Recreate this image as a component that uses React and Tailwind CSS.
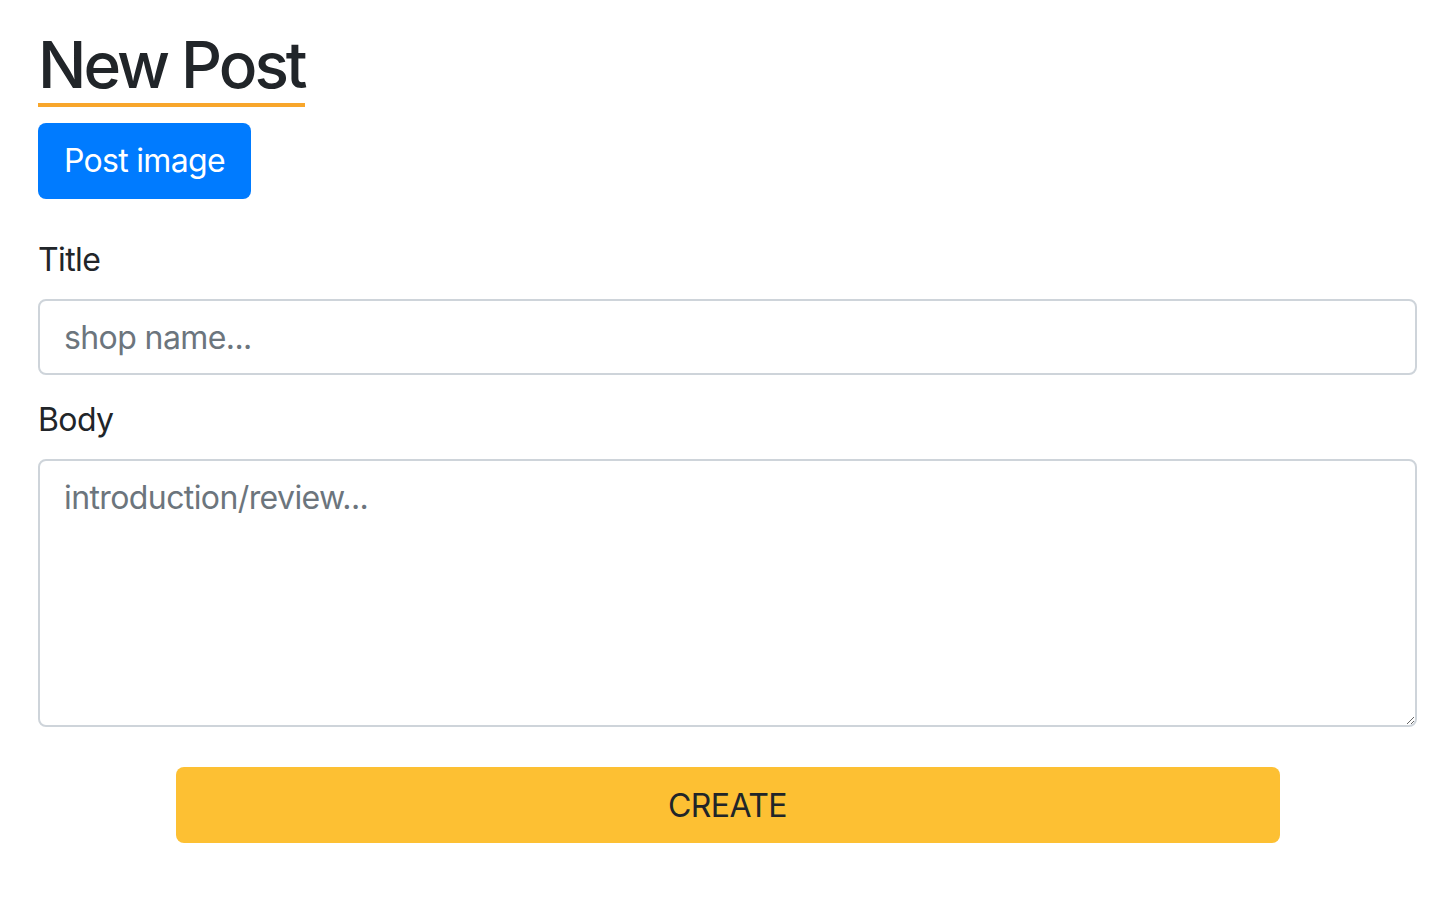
import React from 'react';

const App = () => {
  return (
    <div className="min-h-screen bg-white px-[38px] pt-[27px] text-[#212529] font-['Inter',sans-serif]">
      <h2 className="inline-block text-[64px] leading-[76px] font-medium tracking-[-3px] border-b-[4px] border-[#f8a62b]">
        New Post
      </h2>
      <div className="mt-[16px]">
        <button className="h-[76px] rounded-[8px] bg-[#007bff] px-[26px] text-[32px] leading-[48px] tracking-[-0.7px] text-white">
          Post image
        </button>
      </div>

      <form className="mt-[37px] tracking-[-0.6px]">
        <div>
          <label className="block text-[32px] leading-[48px] mb-[15px]">Title</label>
          <input
            type="text"
            placeholder="shop name..."
            className="block w-full h-[76px] rounded-[8px] border-2 border-[#ced4da] px-[24px] text-[32px] leading-[48px] outline-none placeholder:text-[#6c757d]"
          />
        </div>
        <div className="mt-[21px]">
          <label className="block text-[32px] leading-[48px] mb-[15px]">Body</label>
          <textarea
            placeholder="introduction/review..."
            className="block w-full h-[268px] rounded-[8px] border-2 border-[#ced4da] px-[24px] py-[13px] text-[32px] leading-[48px] outline-none placeholder:text-[#6c757d]"
          />
        </div>
        <div className="mt-[40px] flex justify-center">
          <button
            type="button"
            className="w-[1104px] h-[76px] rounded-[8px] bg-[#fdc033] text-[32px] leading-[48px] pt-[2px] text-[#212529]"
          >
            CREATE
          </button>
        </div>
      </form>
    </div>
  );
};

export default App;
